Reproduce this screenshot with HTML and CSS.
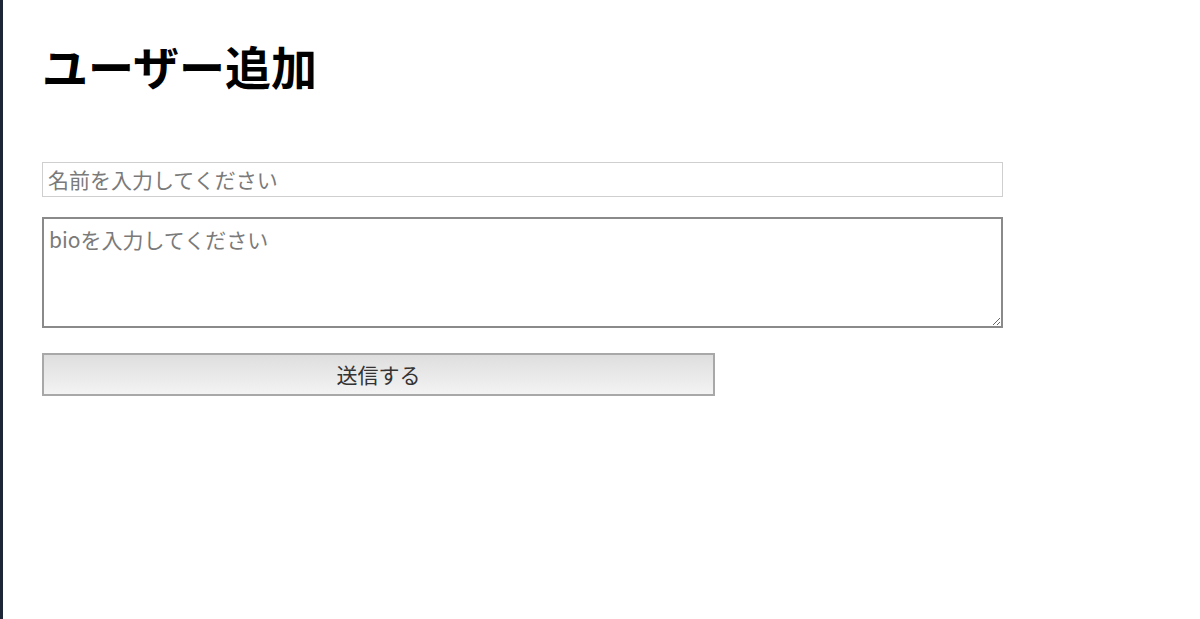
FILE: index.html
```html
<!DOCTYPE html>
<html lang="ja">
<head>
<meta charset="utf-8">
<link rel="stylesheet" href="styles.css">
</head>
<body>
<div class="frame">
  <div class="side"></div>
  <main class="page">
    <h1 class="title">ユーザー追加</h1>
    <form class="form">
      <input class="field" type="text" placeholder="名前を入力してください">
      <textarea class="area" placeholder="bioを入力してください"></textarea>
      <button class="submit" type="button">送信する</button>
    </form>
  </main>
</div>
</body>
</html>
```
FILE: styles.css
```css
html, body {
  margin: 0;
  padding: 0;
  background: #ffffff;
  height: 100%;
}
body {
  font-family: "Noto Sans CJK JP", "Noto Sans", sans-serif;
}
.frame {
  display: flex;
  height: 619px;
}
.side {
  width: 3px;
  background: #1c2636;
  flex: none;
}
.page {
  padding: 35px 0 0 39px;
  width: 962px;
}
.title {
  margin: 0 0 67px 0;
  font-size: 46px;
  font-weight: 700;
  line-height: 60px;
  color: #000;
}
.form {
  display: flex;
  flex-direction: column;
  align-items: flex-start;
}
.field {
  box-sizing: border-box;
  width: 961px;
  height: 35px;
  margin: 0 0 20px 0;
  padding: 0 5px 2px;
  border: 1px solid #cfcfcf;
  font-family: inherit;
  font-size: 21px;
  color: #333;
  outline: none;
}
.field::placeholder, .area::placeholder {
  color: #7a7a7a;
}
.area {
  box-sizing: border-box;
  width: 961px;
  height: 111px;
  margin: 0 0 25px 0;
  padding: 6px 5px;
  border: 2px solid #8a8a8a;
  font-family: inherit;
  font-size: 21px;
  line-height: 28px;
  resize: both;
  outline: none;
}
.submit {
  box-sizing: border-box;
  width: 673px;
  height: 43px;
  border: 2px solid #a8a8a8;
  background: linear-gradient(#dedede, #f3f3f3);
  font-family: inherit;
  font-size: 21px;
  color: #333;
  padding: 0 0 2px;
}
```
